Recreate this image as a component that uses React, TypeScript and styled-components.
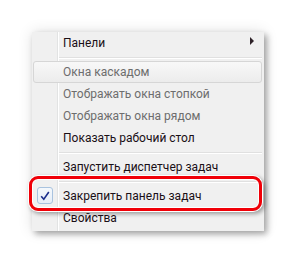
import React from 'react'
import styled, { createGlobalStyle } from 'styled-components'

const Global = createGlobalStyle`
  html, body {
    margin: 0;
    background: #ffffff;
  }
  body {
    font-family: Roboto, "Open Sans", "DejaVu Sans", sans-serif;
  }
`

const Page = styled.div`
  width: 296px;
  height: 263px;
  padding: 32px 0 0 32px;
  box-sizing: border-box;
`

const Menu = styled.div`
  width: 232px;
  box-sizing: border-box;
  padding: 0 2px 2px 1px;
  background: linear-gradient(
    to right,
    #f0f0f0 25px,
    #e2e3e3 25px,
    #e2e3e3 26px,
    #ffffff 26px,
    #ffffff 27px,
    #f0f0f0 27px
  );
  box-shadow: 3px 3px 6px rgba(0, 0, 0, 0.32), 0 0 14px rgba(0, 0, 0, 0.12);
`

const Item = styled.div<{ $disabled?: boolean; $hover?: boolean }>`
  position: relative;
  height: 22px;
  box-sizing: border-box;
  display: flex;
  align-items: center;
  padding-left: 29px;
  font-size: 12px;
  color: ${p => (p.$disabled ? '#6d6d6d' : '#1a0f16')};
  border: 1px solid ${p => (p.$hover ? '#d6d6d6' : 'transparent')};
  border-radius: 3px;
  background: ${p => (p.$hover ? 'linear-gradient(#f8f8f8, #ececec)' : 'transparent')};
  white-space: nowrap;
`

const Separator = styled.div`
  height: 7px;
  display: flex;
  flex-direction: column;
  justify-content: center;
  padding-left: 26px;

  &::before {
    content: '';
    display: block;
    height: 1px;
    background: #e0e0e0;
    border-bottom: 1px solid #ffffff;
  }
`

const Arrow = styled.span`
  margin-left: auto;
  margin-right: 7px;
  width: 0;
  height: 0;
  border-top: 4px solid transparent;
  border-bottom: 4px solid transparent;
  border-left: 4px solid #2e2228;
  transform: translateY(-2px);
`

const CheckBox = styled.span`
  position: absolute;
  left: 3px;
  top: 1px;
  width: 16px;
  height: 17px;
  box-sizing: border-box;
  border: 1px solid #a9c3df;
  border-radius: 3px;
  background: linear-gradient(#f4f8fc, #e6eef8);
  display: flex;
  align-items: center;
  justify-content: center;
`

const Highlight = styled.div`
  position: absolute;
  left: -5px;
  right: -1px;
  top: -10px;
  bottom: -5px;
  border: 3px solid #f00008;
  border-radius: 9px;
  box-shadow: 0 0 0 1px #ffffff, 2px 2px 4px 1px rgba(0, 0, 0, 0.35),
    inset 0 0 0 1px #ffffff;
  pointer-events: none;
`

const Check = () => (
  <svg width="10" height="10" viewBox="0 0 10 10">
    <path d="M1.2 5.2 L3.8 8.2 L8.8 1" fill="none" stroke="#1b2f8c" strokeWidth="1.6" />
  </svg>
)

export default function App() {
  return (
    <Page>
      <Global />
      <Menu>
        <Item>
          Панели
          <Arrow />
        </Item>
        <Separator />
        <Item $disabled $hover>Окна каскадом</Item>
        <Item $disabled>Отображать окна стопкой</Item>
        <Item $disabled>Отображать окна рядом</Item>
        <Item>Показать рабочий стол</Item>
        <Separator />
        <Item>Запустить диспетчер задач</Item>
        <Separator />
        <Item>
          <CheckBox>
            <Check />
          </CheckBox>
          Закрепить панель задач
          <Highlight />
        </Item>
        <Item>Свойства</Item>
      </Menu>
    </Page>
  )
}
